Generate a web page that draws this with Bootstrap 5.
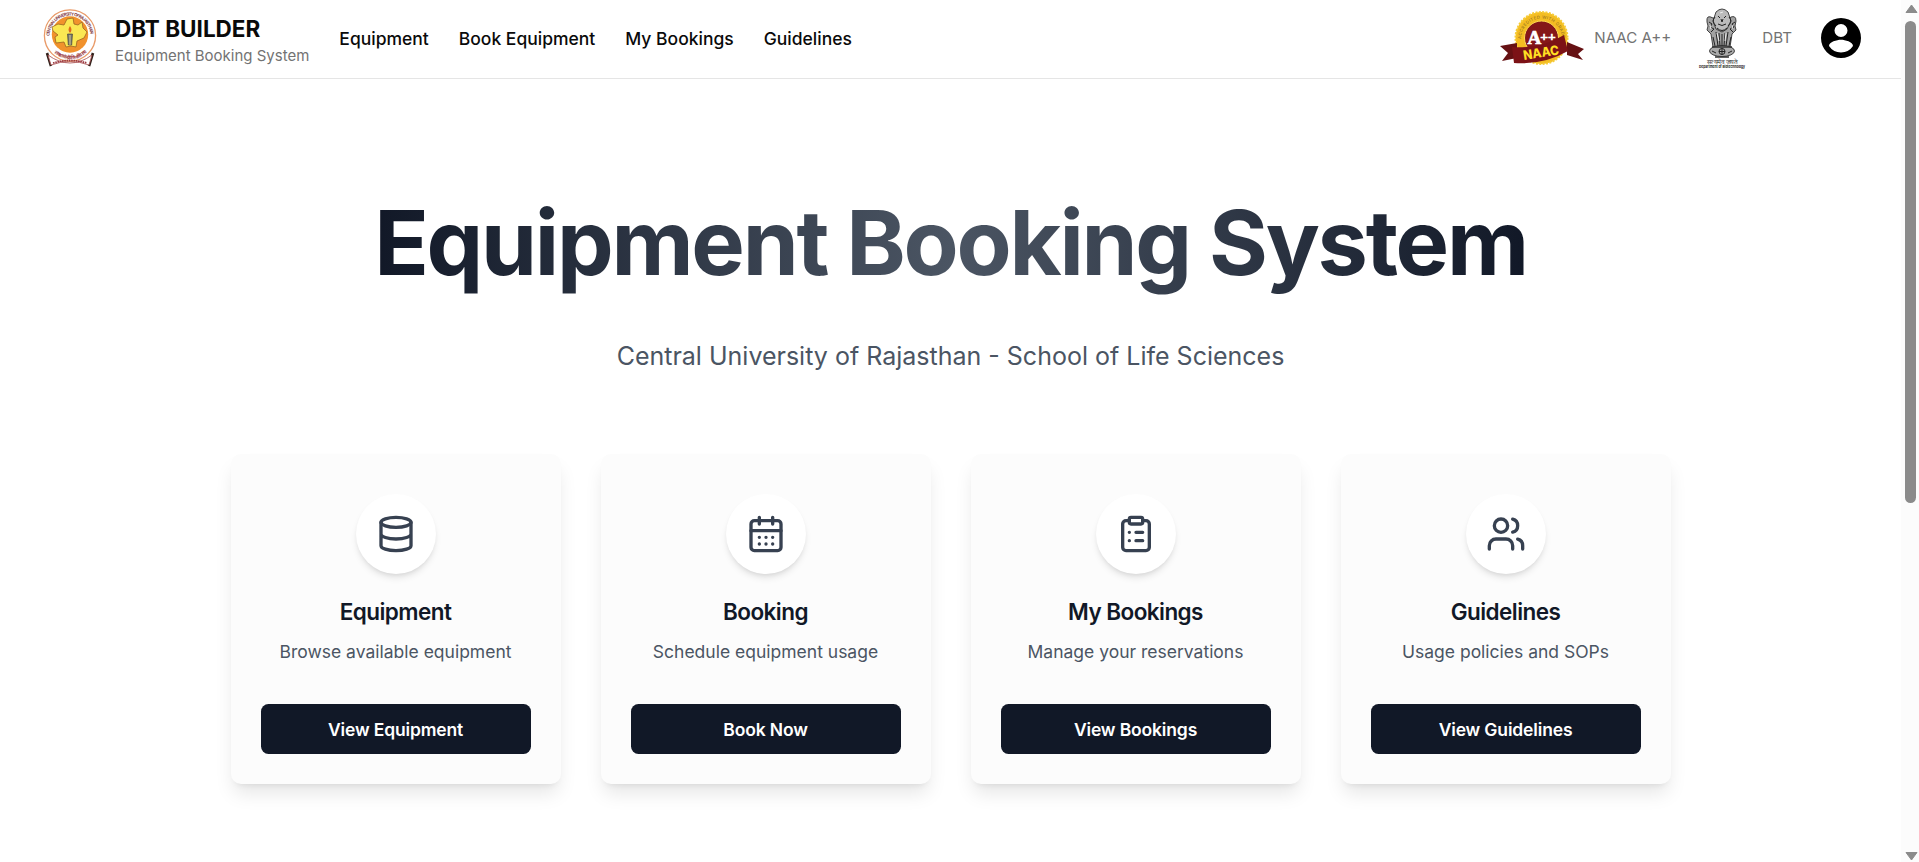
<!DOCTYPE html>
<html lang="en">
<head>
<meta charset="utf-8">
<title>DBT Builder</title>
<link href="https://cdn.jsdelivr.net/npm/bootstrap@5.3.0/dist/css/bootstrap.min.css" rel="stylesheet">
<style>
html,body{height:100%;overflow:hidden}
body{font-family:Inter,"Liberation Sans",sans-serif;color:#0a0a0a;background:#fff}
.topbar{height:79px;border-bottom:1px solid #e5e5e5;padding:0 36px 2px 43px}
.topbar svg{overflow:visible}
.brand-name{font-size:22.5px;line-height:28px;font-weight:700}
.brand-sub{font-size:15px;line-height:20px;color:#737373;margin-top:3px}
.brand-copy{margin-left:18px;padding-top:5px}
.menu{gap:30px;margin-left:30px;font-size:17.5px;font-weight:500;line-height:25px}
.menu a,.partner{color:inherit;text-decoration:none;white-space:nowrap}
.partner{font-size:15.1px;color:#737373;line-height:20px}
.hero-title{font-size:90px;line-height:90px;font-weight:700;letter-spacing:-2.25px;margin:119px 0 0}
.hero-title span{display:inline-block;padding-bottom:10px;margin-bottom:-10px;background:linear-gradient(to right,#111827,#4b5563,#111827);-webkit-background-clip:text;background-clip:text;color:transparent}
.hero-sub{font-size:25px;line-height:35px;color:#4b5563;margin:51px 0 0}
.tiles{width:1440px;gap:40px;margin:80px auto 0}
.tile{flex:1;height:330px;border-radius:10px;background:#fcfcfc;padding:40px 30px 30px;box-shadow:0 12.5px 18.75px -3.75px rgba(0,0,0,.1),0 5px 7.5px -5px rgba(0,0,0,.1)}
.disc{width:80px;height:80px;background:#fff;box-shadow:0 5px 7.5px -1.25px rgba(0,0,0,.1),0 2.5px 5px -2.5px rgba(0,0,0,.1)}
.disc svg{width:40px;height:40px;fill:none;stroke:#374151;stroke-width:2;stroke-linecap:round;stroke-linejoin:round}
.tile h2{font-size:22.5px;line-height:28px;font-weight:600;letter-spacing:-.56px;color:#111827;margin:24px 0 0}
.tile p{font-size:17.5px;line-height:25px;color:#4b5563;margin:13px 0 0}
.btn-ink{height:50px;border-radius:7.5px;background:#111827;color:#fff;font-size:17.5px;font-weight:600;line-height:25px;letter-spacing:-.15px;border:0}
.track{width:18px;background:#fcfcfc;padding:4px 0 1px}
.thumb{width:11px;height:482px;border-radius:6px;background:#8b8b8b;margin:8px 0 0}
</style>
</head>
<body class="d-flex">
<div class="flex-grow-1">
<header class="topbar d-flex align-items-center">
  <svg width="54" height="62" viewBox="43 7 54 62" role="img" aria-label="University seal">
    <defs>
      <path id="arcTop" d="M49.5 36a20.5 20.5 0 0 1 41 0"/>
      <path id="arcLow" d="M47.5 41a23 23 0 0 0 45 0"/>
    </defs>
    <path d="M47 53l4 13M93 53l-4 13" stroke="#302019" stroke-width="2.6"/>
    <path d="M48 55q22 16 44 0l-3 10q-19-7-38 0z" fill="#fff" stroke="#a64b4b" stroke-width=".8"/>
    <circle cx="70" cy="35.5" r="25.6" fill="#fff" stroke="#e99a68" stroke-width="1.3"/>
    <circle cx="70" cy="34.5" r="18.2" fill="#f1922c"/>
    <path d="M67 19l6-1 1 6 4 1 4-3 1 6 4 4-3 6-7 3-1 6-5-1-5 1-2-5-8 1-1-6 3-2-5-4-1-4 6-3 6 1z" fill="#fae753" stroke="#9a6422" stroke-width=".8"/>
    <path d="M67.5 34h5l-.8 11h-3.400z" fill="#77766f" stroke="#3e3b34" stroke-width=".6"/>
    <path d="M70 35v10M68 31h4" stroke="#eee2a0" stroke-width=".8"/>
    <path d="M70 26q3 4 0 7q-3-3 0-7" fill="#df6b18"/>
    <text font-size="4.3" font-weight="700" fill="#874348"><textPath href="#arcTop" textLength="62">CENTRAL UNIVERSITY OF RAJASTHAN</textPath></text>
    <text font-size="4.7" font-weight="700" fill="#a3484d"><textPath href="#arcLow" startOffset="13" textLength="36">राजस्थान केन्द्रीय विश्वविद्यालय</textPath></text>
    <path d="M53 63q17-5 34 0" fill="none" stroke="#9d3b43" stroke-width="1.8" stroke-dasharray="1.6 .7"/>
  </svg>
  <div class="brand-copy">
    <div class="brand-name">DBT BUILDER</div>
    <div class="brand-sub">Equipment Booking System</div>
  </div>
  <nav class="menu d-flex"><a href="#">Equipment</a><a href="#">Book Equipment</a><a href="#">My Bookings</a><a href="#">Guidelines</a></nav>
  <div class="d-flex align-items-center ms-auto">
    <svg width="84" height="56" viewBox="0 0 84 56" role="img" aria-label="NAAC badge">
      <defs><path id="naacArc" d="M21 29a20.5 20.5 0 0 1 41 0"/></defs>
      <circle cx="41.5" cy="28" r="26" fill="#f4bd22"/>
      <circle cx="41.5" cy="28" r="26" fill="none" stroke="#f6cc38" stroke-width="2" stroke-dasharray="2 1.4"/>
      <circle cx="41.5" cy="28" r="17" fill="#851719" stroke="#ffdc55" stroke-width="1"/>
      <text font-size="4.2" font-weight="500" fill="#9b7620"><textPath href="#naacArc" textLength="63">ACCREDITED WITH GRADE</textPath></text>
      <path d="M0 36l17-3v15L2 51l6-8zM84 39l-17-7v13l16 5-5-6z" fill="#661113"/>
      <path d="M12 37q29 2 52-12l4 16q-24 14-54 12z" fill="#7c1216"/>
      <text x="27.5" y="33.5" font-family="Liberation Serif,serif" font-size="19" font-weight="700" fill="#fff" stroke="#fff" stroke-width=".7">A<tspan dx="-1" dy="-3" font-size="13.5">++</tspan></text>
      <text transform="translate(24 50) rotate(-9)" font-size="13" font-weight="800" fill="#ffdf23" textLength="36" lengthAdjust="spacingAndGlyphs">NAAC</text>
    </svg>
    <span class="partner" style="margin-left:10px">NAAC A++</span>
    <svg width="48" height="62" viewBox="0 0 48 62" role="img" aria-label="State emblem" style="margin:1px 16px 0 27px">
      <g fill="#a2a2a2" stroke="#333" stroke-width=".9">
        <path d="M15 10q-7-4-6 4l1 4-1 4 4 4 2 13h17l2-13 4-4-1-4 1-5q0-7-7-3z"/>
        <path d="M18 4q6-6 12 0l3 9-4 8-5 3-6-3-3-8z" fill="#bbb"/>
        <ellipse cx="24" cy="43" rx="12.5" ry="5.5" fill="#aaa"/>
        <path d="M14 39h20M17 49h14" stroke-width="1.6"/>
      </g>
      <g fill="none" stroke="#222" stroke-width="1">
        <path d="M17 9q-4 4 1 9M31 9q4 4-1 9M20 8l2 2M28 8l-2 2M23 11l1 3 1-3M20 16q4 3 8 0M19 20q5 5 10 0M11 14l3 2-2 3 4 2-3 3M37 14l-3 2 2 3-4 2 3 3"/>
        <path d="M18 24l2 14M21 25l1 13M24 26v12M27 25l-1 13M30 24l-2 14M15 29l2 9M33 29l-2 9"/>
        <circle cx="24" cy="43.5" r="3"/><path d="M24 40.5v6M21 43.5h6M14 43l4 2M30 45l4-2"/>
      </g>
      <path d="M19 25l2 8M28 25l-1 8M22 5l3-1M12 17l1 4M35 17l-1 4" stroke="#eee" stroke-width="1"/>
      <text x="9" y="55.5" font-size="6" fill="#333" textLength="30" lengthAdjust="spacingAndGlyphs">सत्यमेव जयते</text>
      <text x="1" y="60" font-size="3.9" font-weight="700" fill="#222" textLength="46" lengthAdjust="spacingAndGlyphs">Department of Biotechnology</text>
    </svg>
    <span class="partner">DBT</span>
    <svg width="48" height="48" viewBox="0 0 24 24" style="margin-left:25px"><path d="M12 2a10 10 0 1 0 0 20 10 10 0 0 0 0-20zm0 3a3 3 0 1 1 0 6.5 3 3 0 0 1 0-6.500zm0 14.2a7.2 7.2 0 0 1-6-3.220c.03-1.990 4-3.080 6-3.080s5.970 1.090 6 3.080a7.2 7.2 0 0 1-6 3.220z"/></svg>
  </div>
</header>
<main class="text-center">
  <h1 class="hero-title"><span>Equipment Booking System</span></h1>
  <p class="hero-sub">Central University of Rajasthan - School of Life Sciences</p>
  <div class="tiles d-flex">
    <section class="tile d-flex flex-column">
      <div class="disc rounded-circle d-flex align-items-center justify-content-center mx-auto"><svg viewBox="0 0 24 24"><ellipse cx="12" cy="5" rx="9" ry="3"/><path d="M3 5v14a9 3 0 0 0 18 0V5M3 12a9 3 0 0 0 18 0"/></svg></div>
      <h2>Equipment</h2><p>Browse available equipment</p>
      <button class="btn btn-ink w-100 mt-auto">View Equipment</button>
    </section>
    <section class="tile d-flex flex-column">
      <div class="disc rounded-circle d-flex align-items-center justify-content-center mx-auto"><svg viewBox="0 0 24 24"><path d="M8 2v4M16 2v4M3 10h18M8 14h.01M12 14h.01M16 14h.01M8 18h.01M12 18h.01M16 18h.01"/><rect x="3" y="4" width="18" height="18" rx="2"/></svg></div>
      <h2>Booking</h2><p>Schedule equipment usage</p>
      <button class="btn btn-ink w-100 mt-auto">Book Now</button>
    </section>
    <section class="tile d-flex flex-column">
      <div class="disc rounded-circle d-flex align-items-center justify-content-center mx-auto"><svg viewBox="0 0 24 24"><rect x="8" y="2" width="8" height="4" rx="1"/><path d="M16 4h2a2 2 0 0 1 2 2v14a2 2 0 0 1-2 2H6a2 2 0 0 1-2-2V6a2 2 0 0 1 2-2h2M12 11h4M12 16h4M8 11h.01M8 16h.01"/></svg></div>
      <h2>My Bookings</h2><p>Manage your reservations</p>
      <button class="btn btn-ink w-100 mt-auto">View Bookings</button>
    </section>
    <section class="tile d-flex flex-column">
      <div class="disc rounded-circle d-flex align-items-center justify-content-center mx-auto"><svg viewBox="0 0 24 24"><path d="M16 21v-2a4 4 0 0 0-4-4H6a4 4 0 0 0-4 4v2M22 21v-2a4 4 0 0 0-3-3.87M16 3.13a4 4 0 0 1 0 7.75"/><circle cx="9" cy="7" r="4"/></svg></div>
      <h2>Guidelines</h2><p>Usage policies and SOPs</p>
      <button class="btn btn-ink w-100 mt-auto">View Guidelines</button>
    </section>
  </div>
</main>
</div>
<div class="track d-flex flex-column flex-shrink-0 ps-1">
  <svg width="13" height="9" viewBox="0 0 13 9"><path d="M6.5 1L12 8.5H1z" fill="#8b8b8b" stroke="#8b8b8b" stroke-linejoin="round"/></svg>
  <div class="thumb"></div>
  <svg class="mt-auto" width="13" height="9" viewBox="0 0 13 9"><path d="M6.5 8L12 .5H1z" fill="#8b8b8b" stroke="#8b8b8b" stroke-linejoin="round"/></svg>
</div>
<script src="https://cdn.jsdelivr.net/npm/bootstrap@5.3.0/dist/js/bootstrap.bundle.min.js"></script>
</body>
</html>
